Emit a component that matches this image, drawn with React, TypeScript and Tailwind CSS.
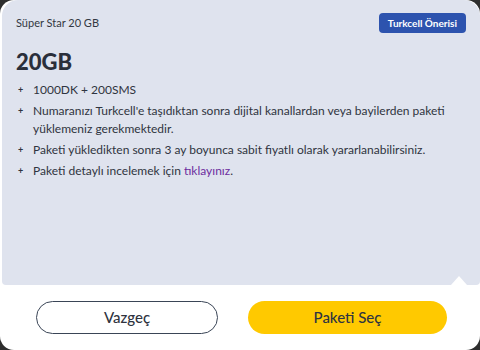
export default function App() {
    const items: React.ReactNode[] = [
        "1000DK + 200SMS",
        "Numaranızı Turkcell'e taşıdıktan sonra dijital kanallardan veya bayilerden paketi yüklemeniz gerekmektedir.",
        "Paketi yükledikten sonra 3 ay boyunca sabit fiyatlı olarak yararlanabilirsiniz.",
        <>
            Paketi detaylı incelemek için <span className="text-[#6d2e9e]">tıklayınız</span>.
        </>,
    ]

    return (
        <div className="w-[480px] h-[350px] bg-[#2e2e2e] font-['Lato',sans-serif]">
            <div className="w-full h-full bg-white rounded-[14px] flex flex-col overflow-hidden">
                {/* Package panel */}
                <div className="relative ml-[2px] h-[285px] bg-[#dfe3ee] rounded-t-[16px] rounded-b-[4px] px-[14px] pt-[13px]">
                    <div className="flex items-center justify-between">
                        <span className="text-[11px] text-[#333842]">Süper Star 20 GB</span>
                        <span className="h-[20px] px-[9px] flex items-center rounded-[4px] bg-[#2d53ae] text-white text-[10px] font-bold">
                            Turkcell Önerisi
                        </span>
                    </div>
                    <h1 className="mt-[16px] text-[22px] font-black leading-[26px] text-[#2a2f3b]">20GB</h1>
                    <ul className="mt-[6px] flex flex-col gap-[3px]">
                        {items.map((t, i) => (
                            <li key={i} className="flex text-[12px] leading-[18px] text-[#2f3440]">
                                <span className="w-[17px] shrink-0 pl-[2px] text-[9px] font-bold">+</span>
                                <span className="pr-[14px]">{t}</span>
                            </li>
                        ))}
                    </ul>
                    {/* notch */}
                    <div className="absolute right-[13px] bottom-0 w-0 h-0 border-l-[8px] border-r-[8px] border-b-[9px] border-l-transparent border-r-transparent border-b-white" />
                </div>

                {/* Actions */}
                <div className="flex items-center gap-[30px] pl-[36px] pr-[33px] pt-[16px]">
                    <button className="w-[182px] h-[33px] rounded-full border-[1.5px] border-[#3a4556] text-[15px] font-medium text-[#2f3440]">
                        Vazgeç
                    </button>
                    <button className="w-[199px] h-[33px] rounded-full bg-[#ffc900] text-[15px] font-medium text-[#2f3440]">
                        Paketi Seç
                    </button>
                </div>
            </div>
        </div>
    )
}
